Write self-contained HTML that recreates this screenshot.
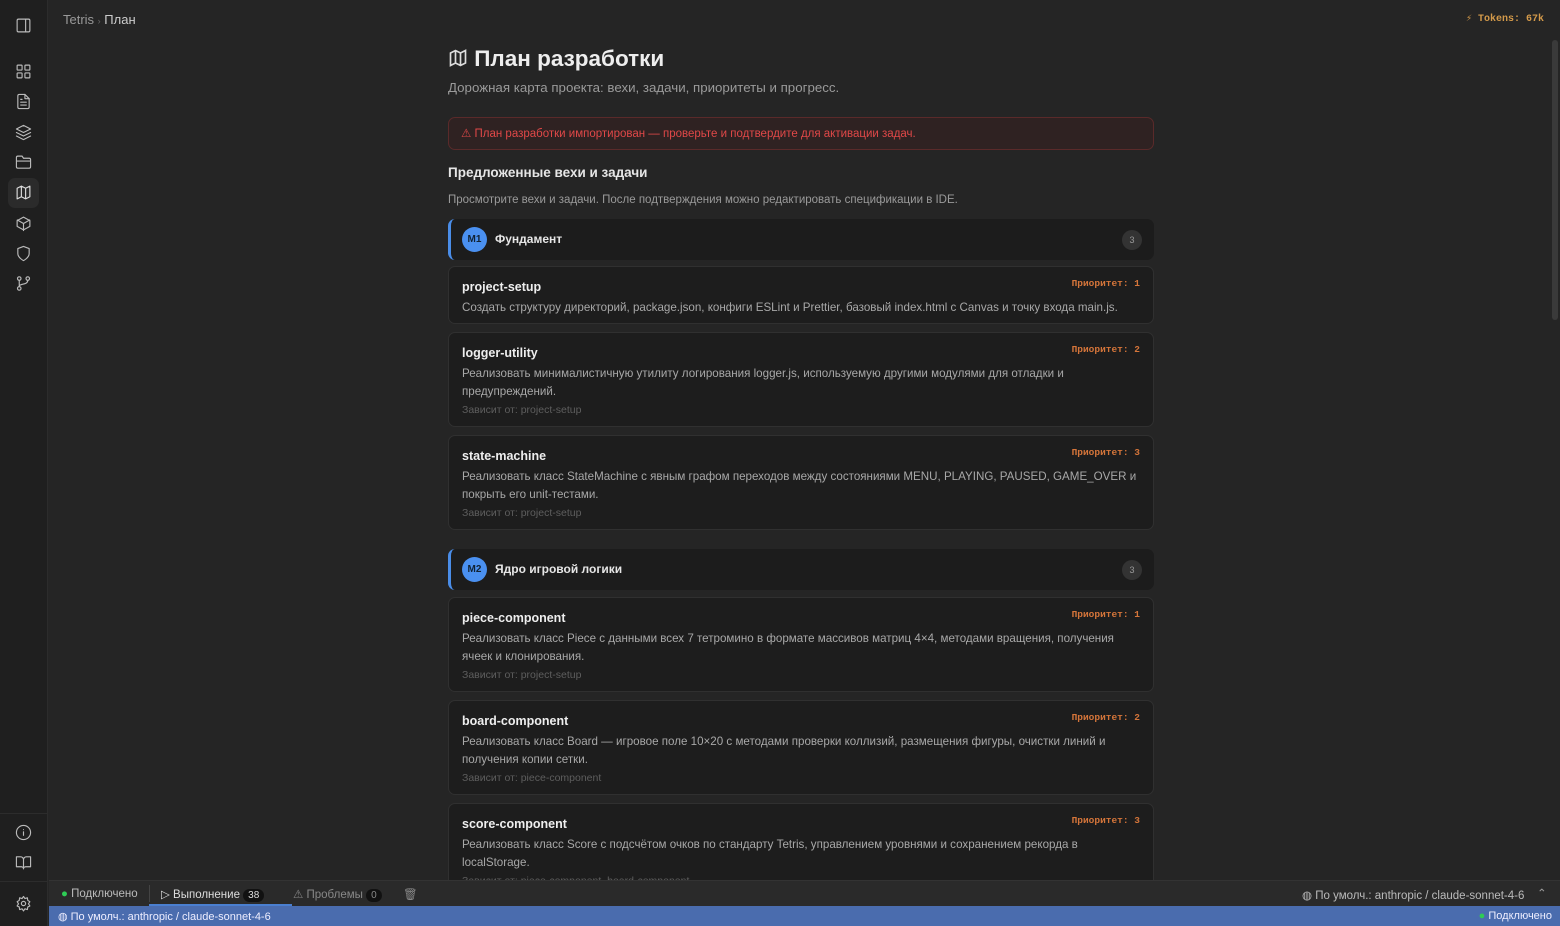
<!DOCTYPE html>
<html><head><meta charset="utf-8"><style>
*{box-sizing:border-box;margin:0;padding:0}
body{width:1560px;height:926px;overflow:hidden;background:#252525;font-family:"Liberation Sans",sans-serif;color:#ddd;position:relative}
.side{position:absolute;left:0;top:0;width:48px;height:926px;background:#1f1f1f;border-right:1px solid #2c2c2c}
.side svg{position:absolute;left:15px;width:17px;height:17px;fill:none;stroke:#bbb;stroke-width:1.6;stroke-linecap:round;stroke-linejoin:round}
.abs{position:absolute}
.card{position:absolute;left:448px;width:706px;background:#1d1d1d;border:1px solid #303030;border-radius:7px;overflow:hidden}
.ms{position:absolute;left:448px;width:706px;height:41px;background:#1c1c1c;border-radius:7px;border-left:3px solid #4a8de8}
.ms .b{position:absolute;left:11px;top:8px;width:25px;height:25px;border-radius:50%;background:#4a90f0;color:#123;font-size:10px;font-weight:bold;text-align:center;line-height:25px}
.ms .t{position:absolute;left:44px;top:13px;font-size:12px;font-weight:bold;color:#e6e6e6}
.ms .c{position:absolute;right:12px;top:11px;width:20px;height:20px;border-radius:50%;background:#333;color:#999;font-size:9px;text-align:center;line-height:20px}
.card h4{position:absolute;left:13px;top:13px;font-size:12.5px;color:#eee}
.card .p{position:absolute;right:13px;top:11px;font-family:"Liberation Mono",monospace;font-size:9.5px;font-weight:bold;color:#d5753a}
.card .d{position:absolute;left:13px;top:32px;width:675px;font-size:11.6px;line-height:18px;color:#a8a8a8}
.card .dep{font-size:10.5px;color:#5e5e5e;display:block;line-height:18px}
</style></head><body>
<div class="side">
<svg style="top:17px" viewBox="0 0 24 24"><rect x="3" y="3" width="18" height="18" rx="2"/><path d="M15 3v18"/></svg>
<svg style="top:63px" viewBox="0 0 24 24"><rect x="3" y="3" width="7" height="7" rx="1"/><rect x="14" y="3" width="7" height="7" rx="1"/><rect x="3" y="14" width="7" height="7" rx="1"/><rect x="14" y="14" width="7" height="7" rx="1"/></svg>
<svg style="top:93px" viewBox="0 0 24 24"><path d="M14 2H6a2 2 0 0 0-2 2v16a2 2 0 0 0 2 2h12a2 2 0 0 0 2-2V8z"/><path d="M14 2v6h6M8 13h8M8 17h8M8 9h2"/></svg>
<svg style="top:124px" viewBox="0 0 24 24"><path d="M12 2 2 7l10 5 10-5z"/><path d="m2 17 10 5 10-5M2 12l10 5 10-5"/></svg>
<svg style="top:154px" viewBox="0 0 24 24"><path d="M4 20h16a2 2 0 0 0 2-2V8a2 2 0 0 0-2-2h-8l-2-3H4a2 2 0 0 0-2 2v13a2 2 0 0 0 2 2zM2 10h20"/></svg>
<div class="abs" style="left:8px;top:178px;width:31px;height:30px;border-radius:7px;background:#2b2b2b"></div>
<svg style="top:184px;stroke:#ddd" viewBox="0 0 24 24"><path d="M3 6l6-3 6 3 6-3v15l-6 3-6-3-6 3z M9 3v15M15 6v15"/></svg>
<svg style="top:215px" viewBox="0 0 24 24"><path d="M21 16V8l-9-5-9 5v8l9 5z"/><path d="M3.3 7 12 12l8.7-5M12 22V12"/></svg>
<svg style="top:245px" viewBox="0 0 24 24"><path d="M12 22s8-4 8-10V5l-8-3-8 3v7c0 6 8 10 8 10z"/></svg>
<svg style="top:275px" viewBox="0 0 24 24"><circle cx="6" cy="5" r="2.5"/><circle cx="18" cy="5" r="2.5"/><circle cx="6" cy="19" r="2.5"/><path d="M6 8v8M18 8c0 6-12 4-12 8"/></svg>
<div class="abs" style="left:0;top:813px;width:48px;border-top:1px solid #2c2c2c"></div>
<svg style="top:824px" viewBox="0 0 24 24"><circle cx="12" cy="12" r="10"/><path d="M12 16v-5M12 8h0"/></svg>
<svg style="top:854px" viewBox="0 0 24 24"><path d="M2 4h6a4 4 0 0 1 4 4v13a3 3 0 0 0-3-3H2zM22 4h-6a4 4 0 0 0-4 4v13a3 3 0 0 1 3-3h7z"/></svg>
<div class="abs" style="left:0;top:881px;width:48px;border-top:1px solid #2c2c2c"></div>
<svg style="top:895px" viewBox="0 0 24 24"><circle cx="12" cy="12" r="3"/><path d="M12 2l2 3 3.5-1 .5 3.5 3 2-2 3 2 3-3 1.5-.5 3.5-3.5-1-2 3-2-3-3.5 1-.5-3.5-3-1.5 2-3-2-3 3-2 .5-3.5 3.5 1z"/></svg>
</div>
<div class="abs" style="left:63px;top:12px;font-size:13px;color:#999">Tetris <span style="font-size:9px;color:#666">›</span> <span style="color:#ccc">План</span></div>
<div class="abs" style="left:1466px;top:13px;font-family:'Liberation Mono',monospace;font-size:10px;font-weight:bold;color:#d49a4a">⚡ Tokens: 67k</div>
<div class="abs" style="left:1552px;top:40px;width:6px;height:280px;background:#3a3a3a;border-radius:3px"></div>
<div class="abs" style="left:448px;top:46px;font-size:22.5px;font-weight:bold;color:#eee">
<svg width="20" height="20" viewBox="0 0 24 24" style="vertical-align:-2px;fill:none;stroke:#ddd;stroke-width:2"><path d="M3 6l6-3 6 3 6-3v15l-6 3-6-3-6 3z M9 3v15M15 6v15"/></svg> План разработки</div>
<div class="abs" style="left:448px;top:80px;font-size:13.3px;color:#9a9a9a">Дорожная карта проекта: вехи, задачи, приоритеты и прогресс.</div>
<div class="abs" style="left:448px;top:117px;width:706px;height:33px;border:1px solid #5a2a2a;background:#2f2222;border-radius:7px;color:#e04848;font-size:11.5px;line-height:32px;padding-left:12px">⚠ План разработки импортирован — проверьте и подтвердите для активации задач.</div>
<div class="abs" style="left:448px;top:165px;font-size:13.5px;font-weight:bold;color:#e6e6e6">Предложенные вехи и задачи</div>
<div class="abs" style="left:448px;top:194px;font-size:11.5px;color:#9a9a9a">Просмотрите вехи и задачи. После подтверждения можно редактировать спецификации в IDE.</div>

<div class="ms" style="top:219px"><div class="b">M1</div><div class="t">Фундамент</div><div class="c">3</div></div>
<div class="card" style="top:266px;height:58px"><h4>project-setup</h4><div class="p">Приоритет: 1</div><div class="d">Создать структуру директорий, package.json, конфиги ESLint и Prettier, базовый index.html с Canvas и точку входа main.js.</div></div>
<div class="card" style="top:332px;height:95px"><h4>logger-utility</h4><div class="p">Приоритет: 2</div><div class="d">Реализовать минималистичную утилиту логирования logger.js, используемую другими модулями для отладки и предупреждений.<span class="dep">Зависит от: project-setup</span></div></div>
<div class="card" style="top:435px;height:95px"><h4>state-machine</h4><div class="p">Приоритет: 3</div><div class="d">Реализовать класс StateMachine с явным графом переходов между состояниями MENU, PLAYING, PAUSED, GAME_OVER и покрыть его unit-тестами.<span class="dep">Зависит от: project-setup</span></div></div>

<div class="ms" style="top:549px"><div class="b">M2</div><div class="t">Ядро игровой логики</div><div class="c">3</div></div>
<div class="card" style="top:597px;height:95px"><h4>piece-component</h4><div class="p">Приоритет: 1</div><div class="d">Реализовать класс Piece с данными всех 7 тетромино в формате массивов матриц 4×4, методами вращения, получения ячеек и клонирования.<span class="dep">Зависит от: project-setup</span></div></div>
<div class="card" style="top:700px;height:95px"><h4>board-component</h4><div class="p">Приоритет: 2</div><div class="d">Реализовать класс Board — игровое поле 10×20 с методами проверки коллизий, размещения фигуры, очистки линий и получения копии сетки.<span class="dep">Зависит от: piece-component</span></div></div>
<div class="card" style="top:803px;height:95px"><h4>score-component</h4><div class="p">Приоритет: 3</div><div class="d">Реализовать класс Score с подсчётом очков по стандарту Tetris, управлением уровнями и сохранением рекорда в localStorage.<span class="dep">Зависит от: piece-component, board-component</span></div></div>

<div class="abs" style="left:49px;top:880px;width:1511px;height:26px;background:#2a2a2a;border-top:1px solid #333;font-size:11.5px;color:#bbb">
<span class="abs" style="left:12px;top:7px"><span style="color:#2ecc55">●</span> Подключено</span>
<span class="abs" style="left:100px;top:4px;height:17px;border-left:1px solid #444"></span>
<span class="abs" style="left:112px;top:6px;color:#ddd">▷ Выполнение <span style="background:#111;border-radius:8px;padding:1px 5px;font-size:10px">38</span></span>
<span class="abs" style="left:100px;top:23px;width:143px;height:2px;background:#4a7fd0"></span>
<span class="abs" style="left:244px;top:6px;color:#888">⚠ Проблемы <span style="background:#111;border-radius:8px;padding:1px 5px;font-size:10px">0</span></span>
<span class="abs" style="left:354px;top:6px;color:#888">🗑</span>
<span class="abs" style="left:1253px;top:7px">◍ По умолч.: anthropic / claude-sonnet-4-6</span>
<span class="abs" style="left:1488px;top:5px;color:#999">⌃</span>
</div>
<div class="abs" style="left:49px;top:906px;width:1511px;height:20px;background:#4a6cae;font-size:11px;color:#eef">
<span class="abs" style="left:9px;top:4px">◍ По умолч.: anthropic / claude-sonnet-4-6</span>
<span class="abs" style="right:8px;top:4px"><span style="color:#2ecc55">●</span> Подключено</span>
</div>
</body></html>
